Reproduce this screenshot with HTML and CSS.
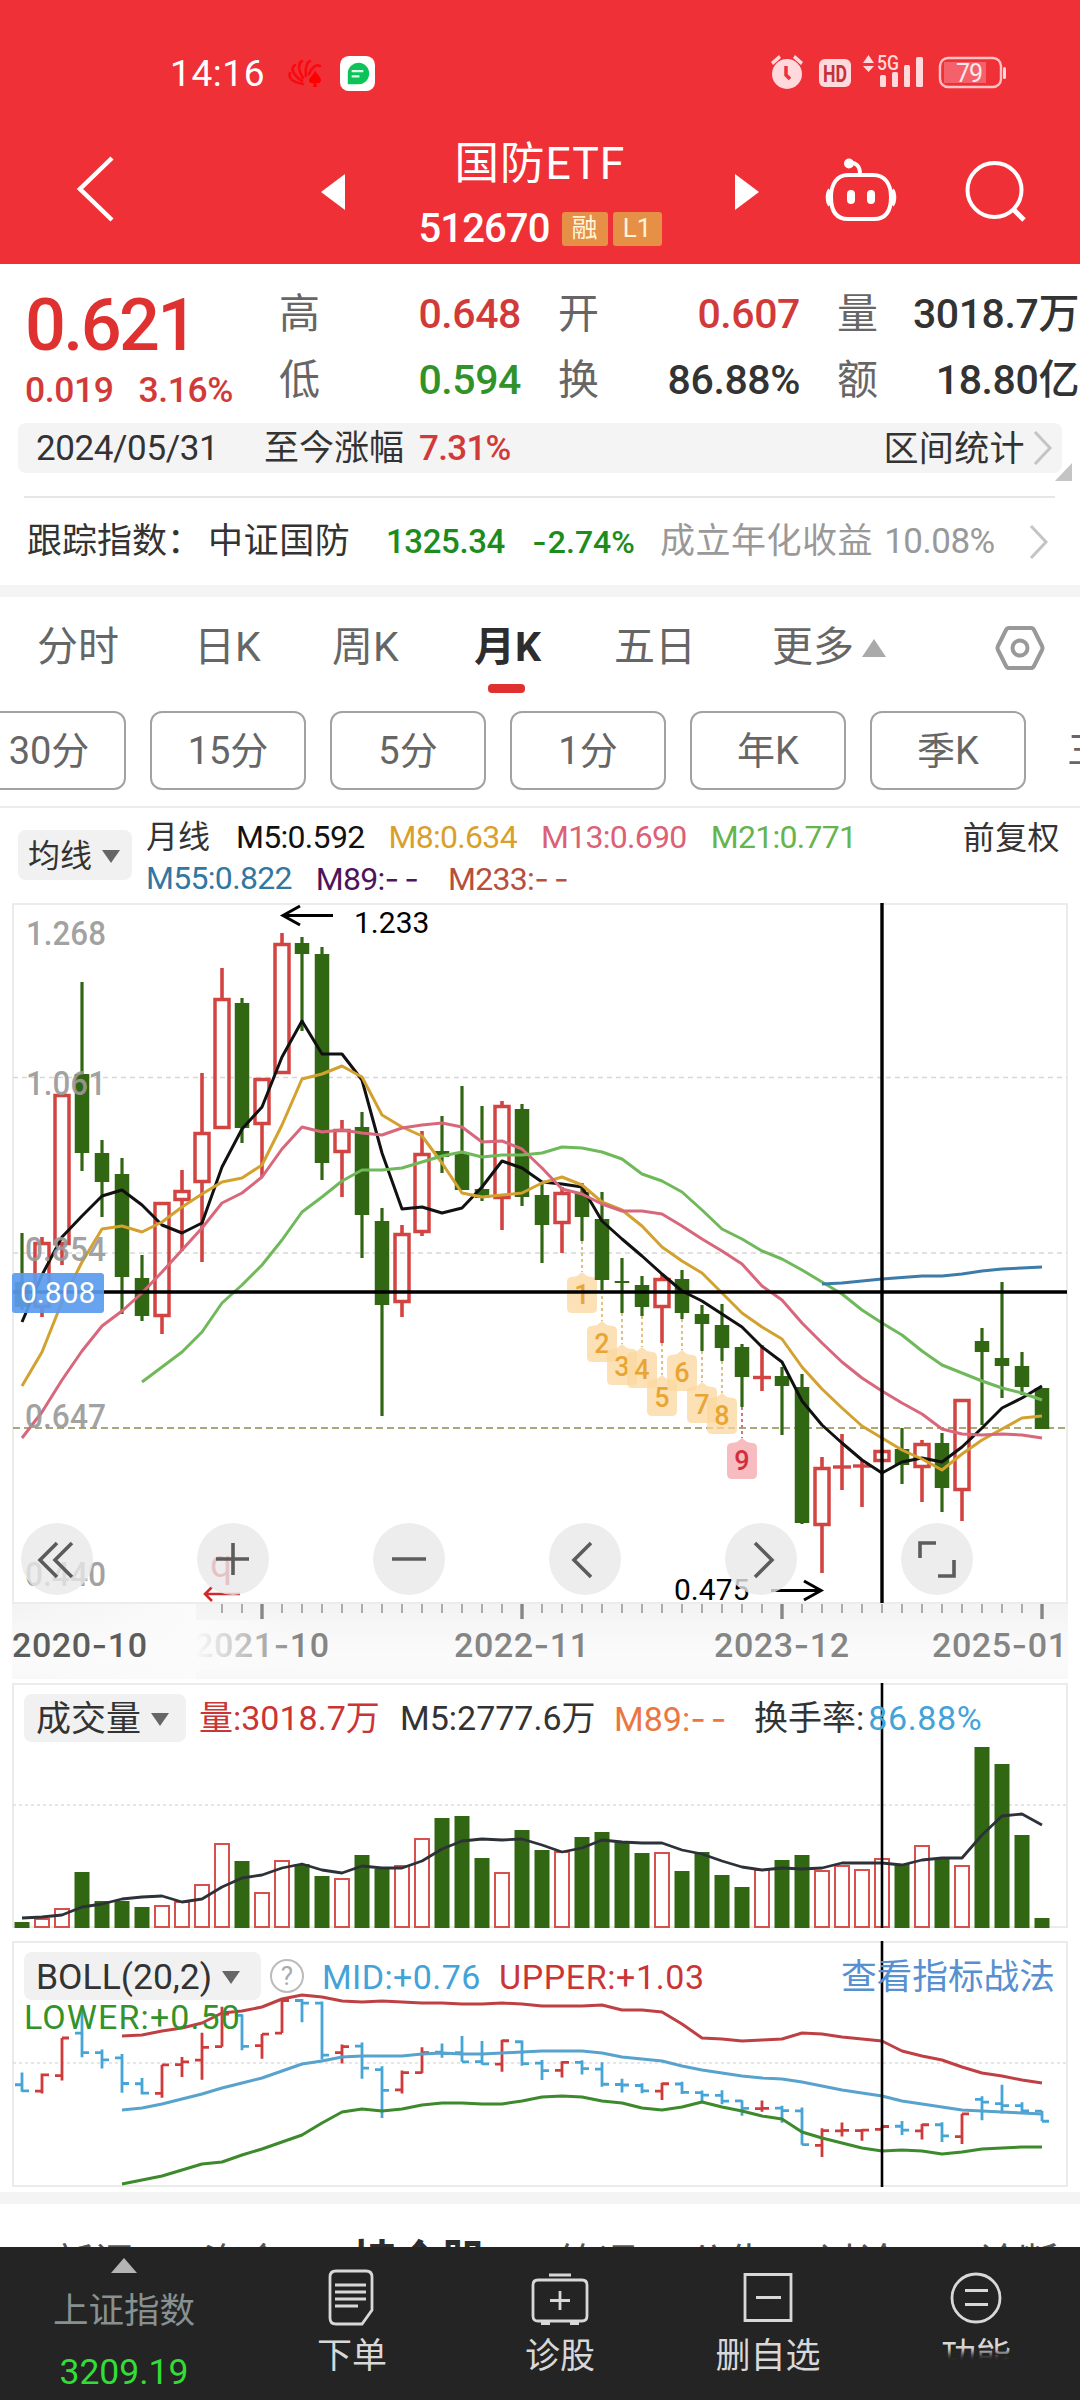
FILE: index.html
```html
<!DOCTYPE html>
<html lang="zh-CN">
<head>
<meta charset="utf-8">
<title>国防ETF 512670</title>
<link rel="stylesheet" href="styles.css">
</head>
<body>
<div class="app">
  <header class="header">
    <div class="status">
      <span class="clock">14:16</span>
      <svg class="st-flower" viewBox="0 0 36 30"><g fill="none" stroke="#f90a10" stroke-width="2.6" stroke-linecap="round"><path d="M16 26C5 24 1 20 3 15M15 23C6 17 3 10 8 7M16 20C11 12 11 5 15 3M19 18C18 10 20 4 23 3M22 16C25 9 29 6 33 8"/></g><path d="M28 12C30 17 34 18 34 23Q33 26 29 25L30 29H26L27 25Q22 26 22 22C23 18 27 17 28 12Z" fill="#f00"/></svg>
      <svg class="st-msg" viewBox="0 0 36 36"><rect width="36" height="36" rx="9" fill="#fff"/><path d="M8 29V18A11 11 0 1 1 18 29Z" fill="#0cc35a"/><path d="M12 15.5H24M12 21H20" stroke="#d8ffe6" stroke-width="2.4"/></svg>
      <svg class="st-right" viewBox="768 50 242 42">
        <g fill="#ffd9db"><circle cx="787" cy="74" r="15"/><path d="M771 62L779 55L781 58L773 65ZM803 62L795 55L793 58L801 65Z"/><rect x="819" y="59" width="32" height="28" rx="6"/><path d="M863 63L868.500 55L874 63ZM863 66H874L868.500 72Z"/><rect x="880" y="75" width="6" height="12" rx="1.500"/><rect x="892" y="72" width="6" height="15" rx="1.500"/><rect x="904" y="65" width="6" height="22" rx="1.500"/><rect x="916" y="57" width="7" height="30" rx="1.500"/><rect x="1003" y="67" width="3" height="12" rx="1.500"/></g>
        <path d="M786 66V75L790 79" fill="none" stroke="#ef3038" stroke-width="3.500"/>
        <rect x="944" y="62" width="42" height="21" fill="#f4616a"/>
        <rect x="940" y="58" width="61" height="29" rx="8" fill="none" stroke="#ffc3c6" stroke-width="2.400"/>
        <text x="823" y="82" class="hd" textLength="24" lengthAdjust="spacingAndGlyphs">HD</text>
        <text x="877" y="70" class="g5" textLength="22" lengthAdjust="spacingAndGlyphs">5G</text>
        <text x="956" y="82" class="bat" textLength="27">79</text>
      </svg>
    </div>
    <div class="nav">
      <svg class="back" viewBox="0 0 40 68"><path d="M36 3L4 34L36 65" fill="none" stroke="#fff" stroke-width="4.500"/></svg>
      <i class="tri-left"></i>
      <div class="title">
        <div class="name">国防ETF</div>
        <div class="code"><span>512670</span><b>融</b><b class="l1">L1</b></div>
      </div>
      <i class="tri-right"></i>
      <svg class="robot" viewBox="825 156 72 68" fill="none" stroke="#fff" stroke-width="4"><path d="M849 163C856 162 860 166 860 174"/><circle cx="849" cy="163.500" r="3" fill="#fff"/><path d="M848 175H873C885 175 891 184 891 197C891 212 885 219 874 219H848C837 219 831 212 831 197C831 184 837 175 848 175Z"/><path d="M830 190C827 193 827 202 830 205M892 190C895 193 895 202 892 205"/><path d="M851 194V200M871 194V200" stroke-width="8" stroke-linecap="round"/></svg>
      <svg class="search" viewBox="964 158 64 66" fill="none" stroke="#fff" stroke-width="4"><circle cx="994.500" cy="190" r="27"/><path d="M1013 209L1024 220" stroke-width="5"/></svg>
    </div>
  </header>

  <section class="quote">
    <div class="last">
      <div class="price">0.621</div>
      <div class="chg"><span>0.019</span><span>3.16%</span></div>
    </div>
    <dl class="stats">
      <dt>高</dt><dd class="up">0.648</dd><dt>开</dt><dd class="up">0.607</dd><dt>量</dt><dd>3018.7万</dd>
      <dt>低</dt><dd class="down">0.594</dd><dt>换</dt><dd>86.88%</dd><dt>额</dt><dd>18.80亿</dd>
    </dl>
  </section>

  <section class="range">
    <span class="date">2024/05/31</span><span>至今涨幅</span><span class="up pct">7.31%</span>
    <span class="stat-link">区间统计</span>
    <svg class="chev" viewBox="0 0 20 36"><path d="M2 2L17 18L2 34" fill="none" stroke="#c4c4c4" stroke-width="3"/></svg>
    <i class="corner"></i>
  </section>

  <section class="track">
    <span class="t-label">跟踪指数：</span><span class="t-name">中证国防</span><span class="t-val">1325.34</span><span class="t-pct"><i class="dash">-</i>2.74%</span><span class="t-year">成立年化收益 <em>10.08%</em></span>
    <svg class="chev" viewBox="0 0 20 36"><path d="M2 2L17 18L2 34" fill="none" stroke="#c4c4c4" stroke-width="3"/></svg>
  </section>

  <nav class="tabs">
    <span>分时</span><span>日K</span><span>周K</span><span class="active">月K</span><span>五日</span><span class="more">更多<i></i></span>
    <svg class="hex" viewBox="0 0 50 46" fill="none" stroke="#999" stroke-width="4"><path d="M14 3H36Q38 3 39 5L47 21Q48 23 47 25L39 41Q38 43 36 43H14Q12 43 11 41L3 25Q2 23 3 21L11 5Q12 3 14 3Z"/><circle cx="25" cy="23" r="7.500"/></svg>
  </nav>
  <div class="chips">
    <span class="first">30分</span><span>15分</span><span>5分</span><span>1分</span><span>年K</span><span>季K</span><span class="cut">三日</span>
  </div>

  <section class="ma">
    <div class="pill small">均线<i></i></div>
    <div class="ma-lines">
      <div><span class="c-txt">月线</span><span class="c-m5">M5:0.592</span><span class="c-m8">M8:0.634</span><span class="c-m13">M13:0.690</span><span class="c-m21">M21:0.771</span></div>
      <div><span class="c-m55">M55:0.822</span><span class="c-m89">M89:<i class="dash">--</i></span><span class="c-m233">M233:<i class="dash">--</i></span></div>
    </div>
    <span class="adj">前复权</span>
  </section>

  <section class="kline">
    <svg class="plot" viewBox="0 903 1080 780">
      <defs>
        <linearGradient id="axisBg" x1="0" y1="0" x2="0" y2="1"><stop offset="0" stop-color="#f3f3f3"/><stop offset=".7" stop-color="#fbfbfb"/><stop offset="1" stop-color="#f8f8f8"/></linearGradient>
        <linearGradient id="fade" gradientUnits="userSpaceOnUse" x1="195" y1="0" x2="300" y2="0"><stop offset="0" stop-color="#fbfbfb"/><stop offset="1" stop-color="#fbfbfb" stop-opacity="0"/></linearGradient>
        <linearGradient id="fadeLeft" gradientUnits="userSpaceOnUse" x1="12" y1="0" x2="195" y2="0"><stop offset="0" stop-color="#fbfbfb" stop-opacity="0"/><stop offset="1" stop-color="#fbfbfb"/></linearGradient>
        <path id="tag" d="M-15 10Q-15 5 -10 5L-5 4L0 0L5 4L10 5Q15 5 15 10V36Q15 41 10 41H-10Q-15 41 -15 36Z"/>
      </defs>
      <rect x="12" y="1603" width="1056" height="76" fill="url(#axisBg)"/>
      <rect x="12" y="1603" width="184" height="76" fill="url(#fadeLeft)"/>
      <path d="M13 1603V904H1067V1603Z" fill="#fff" stroke="#ececec" stroke-width="2"/>
      <path d="M13 1077.500H1067M13 1253H1067" stroke="#d8d8d8" stroke-width="1.500" stroke-dasharray="5 4"/>
      <path d="M13 1428H1067" stroke="#aaa878" stroke-width="2" stroke-dasharray="7 4"/>
      <g id="tags"></g>
      <g id="candles"></g>
      <g id="averages" fill="none" stroke-width="3" stroke-linejoin="round"></g>
      <g class="ylab">
        <text x="26" y="945" textLength="80" lengthAdjust="spacingAndGlyphs">1.268</text>
        <text x="26" y="1095" textLength="80" lengthAdjust="spacingAndGlyphs">1.061</text>
        <text x="25" y="1261" textLength="81" lengthAdjust="spacingAndGlyphs">0.854</text>
        <text x="25" y="1428" textLength="81" lengthAdjust="spacingAndGlyphs">0.647</text>
        <text x="25" y="1586" textLength="81" lengthAdjust="spacingAndGlyphs">0.440</text>
      </g>
      <path d="M13 1292H1067M882 903V1603" stroke="#000" stroke-width="3.400"/>
      <rect x="12" y="1273" width="92" height="40" rx="3" fill="#5b9bee" fill-opacity=".92"/>
      <text x="20" y="1303" class="num" fill="#fff">0.808</text>
      <text x="354" y="933" class="num">1.233</text>
      <text x="674" y="1600" class="num">0.475</text>
      <g fill="none" stroke="#000" stroke-width="3"><path d="M333 915.500H283M300 906L283 915.500L300 925"/><path d="M771 1590.500H821M804 1581L821 1590.500L804 1600"/></g>
      <text x="210" y="1577" class="q">q</text>
      <path d="M240 1594H205M212 1587L205 1594L212 1601" fill="none" stroke="#d02a2a" stroke-width="2.600"/>
      <g id="ticks"></g>
      <g class="dates">
        <text x="12" y="1657" textLength="135" class="now">2020<tspan>-</tspan>10</text>
        <text x="194" y="1657" textLength="135">2021<tspan>-</tspan>10</text>
        <text x="454" y="1657" textLength="135">2022<tspan>-</tspan>11</text>
        <text x="714" y="1657" textLength="135">2023<tspan>-</tspan>12</text>
        <text x="932" y="1657" textLength="135">2025<tspan>-</tspan>01</text>
      </g>
      <rect x="190" y="1620" width="110" height="50" fill="url(#fade)"/>
    </svg>
    <div class="tools">
      <button><svg viewBox="0 0 72 72"><path d="M36 20L19 37L36 54M51 20L34 37L51 54"/></svg></button>
      <button><svg viewBox="0 0 72 72"><path d="M19 36H52M36 20V52"/></svg></button>
      <button><svg viewBox="0 0 72 72"><path d="M19 36H53"/></svg></button>
      <button><svg viewBox="0 0 72 72"><path d="M42 20L25 37L42 54"/></svg></button>
      <button><svg viewBox="0 0 72 72"><path d="M30 20L47 37L30 54"/></svg></button>
      <button><svg viewBox="0 0 72 72"><path d="M19 35V20H35M53 37V53H37"/></svg></button>
    </div>
  </section>

  <section class="panel">
    <svg class="plot" viewBox="0 1683 1080 245">
      <path d="M13 1684H1067V1927H13Z" fill="none" stroke="#ebebeb" stroke-width="2"/>
      <path d="M13 1805H1067" stroke="#dedede" stroke-width="1.500" stroke-dasharray="3 3"/>
      <g id="volume"></g>
      <path d="M882 1683V1928" stroke="#000" stroke-width="2.600"/>
    </svg>
    <div class="legend vol">
      <div class="pill">成交量<i></i></div>
      <span class="c-red v1">量:3018.7万</span><span class="v2">M5:2777.6万</span><span class="c-org v3">M89:<i class="dash">--</i></span><span>换手率:<em>86.88%</em></span>
    </div>
  </section>

  <section class="panel boll">
    <svg class="plot" viewBox="0 1941 1080 246">
      <path d="M13 1942H1067V2186H13Z" fill="none" stroke="#ebebeb" stroke-width="2"/>
      <path d="M13 2063H1067" stroke="#dedede" stroke-width="1.500" stroke-dasharray="3 3"/>
      <g id="bands" fill="none" stroke-width="3" stroke-linejoin="round"></g>
      <path d="M882 1941V2187" stroke="#000" stroke-width="2.600"/>
    </svg>
    <div class="legend bl">
      <div class="pill">BOLL(20,2)<i></i></div>
      <span class="help">?</span>
      <span class="c-mid">MID:+0.76</span><span class="c-red upper">UPPER:+1.03</span>
      <a>查看指标战法</a>
      <span class="c-low">LOWER:+0.50</span>
    </div>
  </section>

  <section class="below"><span>新闻</span><span>资金</span><span class="on">持仓股</span><span>简况</span><span>公告</span><span class="wide">讨论</span><span>诊断</span></section>

  <footer class="bar">
    <div class="index"><i></i><span>上证指数</span><b>3209.19</b></div>
    <div class="item"><svg viewBox="0 0 60 60"><path d="M14 3H44Q50 3 50 9V42L40 56H14Q8 56 8 50V9Q8 3 14 3Z"/><path d="M13 17H44M13 24H44M13 31H44M13 38H36"/></svg><span>下单</span></div>
    <div class="item"><svg viewBox="0 0 60 60"><path d="M8 12H52Q57 12 57 17V48Q57 53 52 53H8Q3 53 3 48V17Q3 12 8 12ZM19 7H41M30 23V42M20 32.500H40M11 55.500H20M40 55.500H49"/></svg><span>诊股</span></div>
    <div class="item"><svg viewBox="0 0 60 60"><path d="M7 6.500H53V52.500H7ZM18 29.500H43"/></svg><span>删自选</span></div>
    <div class="item last-item"><svg viewBox="0 0 60 60"><circle cx="30" cy="30" r="24"/><path d="M19 22.500H42M19 36.500H42"/></svg><span>功能</span></div>
  </footer>
</div>
<script src="chart.js"></script>
</body>
</html>
```
FILE: styles.css
```css
* { box-sizing: border-box; }
body { margin: 0; background: #fff; }
.app { width: 1080px; height: 2400px; overflow: hidden; font-family: Roboto, "Noto Sans CJK SC", sans-serif; font-size: 34px; line-height: 1; color: #333; background: #fff; }
i, em { font-style: normal; }
svg { display: block; }
span, dt, dd, a { white-space: nowrap; }
.up { color: #d23a3a; }
.down { color: #32922a; }
.dash { font-family: Inter, sans-serif; letter-spacing: 5px; }

.header { height: 264px; background: #f03037; color: #fff; padding-top: 50px; }
.status { display: flex; align-items: center; height: 46px; padding-left: 170px; }
.clock { font-size: 37px; width: 117px; letter-spacing: .6px; }
.st-flower { width: 36px; height: 30px; margin-right: 17px; }
.st-msg { width: 35px; height: 35px; margin-right: 393px; }
.st-right { width: 242px; height: 42px; margin-top: -4px; }
.hd { font: 700 23px Roboto; fill: #c2323b; }
.g5 { font: 500 21px Roboto; fill: #ffd9db; }
.bat { font: 25px Roboto; fill: #ffe9ea; }
.nav { display: flex; align-items: flex-start; padding-left: 76px; }
.back { width: 40px; height: 68px; margin: 59px 205px 0 0; }
.tri-left { margin-top: 78px; border: 18px solid transparent; border-right: 24px solid #fff; border-left: 0; }
.tri-right { margin-top: 78px; border: 18px solid transparent; border-left: 24px solid #fff; border-right: 0; }
.title { width: 390px; padding-top: 45px; text-align: center; }
.name { font-size: 44.5px; line-height: 46px; letter-spacing: 1px; }
.code { display: flex; align-items: center; justify-content: center; margin-top: 24px; height: 36px; font-size: 40px; font-weight: 500; }
.code span { margin-right: 12px; letter-spacing: -.9px; }
.code b { width: 46px; height: 34px; margin-right: 5px; border-radius: 3px; background: #e68f47; color: #fff4d8; font-weight: 400; font-size: 26px; line-height: 33px; }
.code .l1 { width: 49px; margin-right: 0; }
.robot { width: 72px; height: 68px; margin: 60px 67px 0 66px; }
.search { width: 64px; height: 66px; margin-top: 62px; }

.quote { display: flex; height: 159px; padding: 17px 1px 0 25px; }
.last { width: 254px; color: #e03131; }
.price { font-size: 72px; font-weight: 500; line-height: 90px; letter-spacing: -2.6px; }
.chg { display: flex; gap: 25px; margin-top: -4px; font-size: 35.5px; font-weight: 500; line-height: 46px; color: #d23a3a; letter-spacing: -.4px; }
.stats { flex: 1; display: grid; grid-template-columns: 41px 201px 78px 201px 78px 1fr; grid-template-rows: 66px 66px; margin: 0; font-size: 41px; line-height: 67px; }
.stats dt { color: #666; text-align: right; }
.stats dd { margin: 0; text-align: right; font-weight: 500; letter-spacing: -.4px; }

.range { position: relative; display: flex; align-items: center; height: 50px; margin: 0 18px; padding: 0 9px 0 18px; border-radius: 8px; background: #f4f4f4; font-size: 35px; }
.date { width: 228px; letter-spacing: -.4px; }
.range .pct { margin-left: 15px; font-weight: 500; letter-spacing: -.7px; }
.stat-link { margin-left: auto; margin-right: 8px; padding-top: 3px; letter-spacing: .4px; }
.chev { width: 20px; height: 36px; }
.corner { position: absolute; right: -10px; bottom: -8px; width: 0; height: 0; border: solid transparent; border-width: 0 0 18px 17px; border-bottom-color: #c4c4c4; }

.track { display: flex; align-items: center; height: 112px; padding: 25px 31px 0 27px; font-size: 35px; background: linear-gradient(#e6e6e6, #e6e6e6) 24px 23px / 1031px 2px no-repeat; }
.t-label { width: 181px; }
.t-name { width: 178px; letter-spacing: .6px; }
.t-val { width: 146px; font-size: 33px; font-weight: 500; letter-spacing: -.4px; color: #1c8c1c; }
.t-pct { width: 128px; font-size: 32px; font-weight: 500; color: #1c8c1c; }
.t-pct .dash { letter-spacing: 1px; }
.t-year { color: #999; flex: 1; letter-spacing: .5px; }
.t-year em { margin-left: 2px; letter-spacing: -.5px; }

.tabs { display: grid; grid-template-columns: 157px 138px 142px 140px 158px 222px 50px; align-items: center; height: 126px; padding: 0 0 13px 37px; border-top: 12px solid #f4f4f4; font-size: 41px; color: #666; }
.tabs .active { color: #2d2d2d; font-weight: 700; position: relative; }
.tabs .active::after { content: ""; position: absolute; left: 14px; top: 57px; width: 37px; height: 9px; border-radius: 4px; background: #e03131; }
.more { display: flex; align-items: center; }
.more i { margin-left: 8px; border: 12px solid transparent; border-top: 0; border-bottom: 18px solid #aaa; }
.hex { width: 50px; height: 46px; margin-left: 1px; }
.chips { display: flex; gap: 24px; height: 97px; margin-left: -30px; border-bottom: 2px solid #ececec; overflow: hidden; }
.chips span { flex: none; width: 156px; height: 79px; border: 2px solid #a2a2a2; border-radius: 12px; color: #666; font-size: 38px; line-height: 76px; text-align: center; }
.chips .cut { border: 0; text-align: left; padding-left: 17px; line-height: 79px; }
.chips .first { padding-left: 2px; }

.pill { display: flex; align-items: center; height: 48px; padding-left: 12px; border-radius: 8px; background: #f1f1f1; color: #333; }
.pill i { border: 9px solid transparent; border-bottom: 0; border-top: 13px solid #666; }
.pill.small { width: 114px; height: 50px; padding: 2px 0 0 10px; font-size: 32px; }
.pill.small i { margin-left: 10px; }
.ma { display: flex; height: 95px; padding: 22px 20px 0 18px; font-size: 32px; }
.ma-lines { width: 800px; margin: -13px 0 0 14px; line-height: 41px; }
.ma-lines div { display: flex; gap: 24px; }
.ma-lines span { letter-spacing: -.7px; }
.ma-lines .dash { letter-spacing: 5px; }
.ma-lines .c-txt { margin-right: 2px; letter-spacing: 0; }
.ma-lines .c-m5 { color: #111; }
.adj { margin: -12px 0 0 auto; line-height: 41px; letter-spacing: .4px; }
.c-m8 { color: #d9a02b; } .c-m13 { color: #dc6176; } .c-m21 { color: #65b44c; }
.c-m55 { color: #3277a1; } .c-m89 { color: #4d145c; } .c-m233 { color: #b4503c; }

.kline { position: relative; height: 780px; }
.plot { width: 100%; height: 100%; }
.ylab text { font: 500 34px Roboto; fill: #999; fill-opacity: .92; }
.num { font: 30px Roboto; }
.q { font: 39px Roboto; fill: #d8303a; }
.dates text { font: 500 34px Roboto; fill: #858585; }
.dates .now { fill: #5c5c5c; }
.dates tspan { font-family: Inter; }
.tag-num { font: 500 27px Roboto; text-anchor: middle; }
.tools { position: absolute; left: 21px; top: 620px; display: flex; gap: 104px; }
.tools button { width: 72px; height: 72px; padding: 0; border: 0; border-radius: 50%; background: rgba(232, 232, 232, .8); }
.tools path { fill: none; stroke: #5c5c5c; stroke-width: 3.6; }

.panel { display: grid; height: 245px; margin-bottom: 13px; }
.panel > * { grid-area: 1 / 1; }
.boll { height: 246px; margin-bottom: 5px; }
.legend { display: flex; align-items: flex-start; height: 245px; padding: 11px 25px 0 24px; line-height: 49px; }
.legend .pill { margin-right: 13px; }
.vol .pill { width: 162px; padding-top: 3px; font-size: 35px; }
.vol .pill i { margin-left: 10px; }
.v1 { width: 201px; } .v2 { width: 214px; } .v3 { width: 140px; }
.vol em { margin-left: 4px; color: #43a3d8; letter-spacing: .6px; }
.c-red { color: #cb3434; } .c-org { color: #e9773f; } .c-mid { color: #43a3d8; width: 177px; letter-spacing: .4px; } .c-low { color: #34922a; }
.upper { letter-spacing: .6px; }
.bl { flex-wrap: wrap; align-content: flex-start; line-height: 51px; }
.bl .pill { width: 237px; margin-right: 9px; padding-top: 2px; font-size: 35.5px; }
.bl .pill i { margin-left: 10px; }
.help { width: 34px; height: 34px; margin: 7px 18px 0 0; border: 2.5px solid #bbb; border-radius: 50%; color: #aaa; font-size: 26px; line-height: 30px; text-align: center; }
.legend a { margin-left: auto; font-size: 35.7px; color: #5790d0; }
.c-low { width: 100%; margin-top: -12px; line-height: 52px; letter-spacing: 1.1px; }

.below { display: flex; height: 55px; padding: 42px 0 0 54px; border-top: 12px solid #f4f4f4; overflow: hidden; font-size: 40px; line-height: 40px; color: #555; }
.below span { flex: none; width: 149px; margin-top: -2px; }
.below .on { width: 206px; margin-top: -3px; color: #2d2d2d; font-weight: 700; font-size: 45px; }
.below span:nth-child(n+4) { width: 130px; }
.below .wide:nth-child(6) { width: 160px; }

.bar { display: grid; grid-template-columns: 248px repeat(4, 208px); height: 153px; background: #242424; color: #d8d8d8; }
.index { display: flex; flex-direction: column; align-items: center; padding-top: 11px; font-size: 35.5px; color: #879191; }
.index i { border: 13px solid transparent; border-top: 0; border-bottom: 15px solid #b4b4b4; margin-bottom: 21px; }
.index b { margin-top: 25px; font-weight: 400; color: #32dd35; font-size: 35.5px; }
.item { display: flex; flex-direction: column; align-items: center; padding-top: 21px; font-size: 35px; }
.item svg { width: 60px; height: 60px; fill: none; stroke: #d8d8d8; stroke-width: 2.8; }
.item span { margin-top: 11px; }
.last-item { position: relative; }
.last-item::after { content: ""; position: absolute; left: 42px; top: 106px; width: 160px; height: 46px; background: #242424; filter: blur(3px); }
```
FILE: chart.js
```js
// [rising, high, body top, body bottom, low, volume top] for each month
const months = [
[0,1233,1282,1307,1310,1922],[1,1237,1242,1308,1317,1918],[1,1094,1094,1245,1265,1908],[0,982,1074,1153,1171,1872],[0,1140,1153,1182,1217,1901],[0,1158,1174,1277,1314,1901],
[0,1255,1278,1316,1321,1907],[1,1202,1202,1317,1334,1905],[1,1170,1190,1201,1251,1901],[1,1073,1132,1183,1262,1884],[1,968,998,1129,1129,1843],[0,998,1003,1128,1143,1861],
[1,1078,1078,1125,1177,1892],[1,933,943,1074,1074,1860],[0,937,943,954,1031,1864],[0,947,954,1163,1180,1876],[1,1120,1129,1153,1197,1878],[0,1112,1127,1215,1258,1855],
[0,1208,1221,1305,1416,1869],[1,1225,1233,1303,1317,1865],[1,1131,1153,1233,1236,1838],[0,1116,1151,1157,1173,1818],[0,1086,1153,1190,1190,1816],[0,1106,1189,1198,1201,1858],
[1,1101,1105,1199,1230,1872],[0,1104,1109,1197,1206,1830],[0,1182,1195,1225,1263,1850],[1,1187,1192,1224,1253,1851],[0,1183,1192,1217,1241,1837],[0,1192,1219,1280,1290,1832],
[0,1258,1281,1283,1313,1842],[0,1276,1285,1307,1316,1853],[1,1274,1278,1308,1343,1852],[0,1270,1279,1313,1319,1871],[0,1305,1314,1324,1351,1852],[0,1304,1325,1348,1361,1875],
[0,1344,1347,1377,1407,1887],[1,1345,1377,1378,1391,1869],[0,1367,1376,1386,1435,1860],[0,1374,1387,1523,1524,1855],[1,1457,1467,1526,1573,1870],[1,1434,1466,1468,1490,1865],
[1,1460,1465,1467,1507,1869],[1,1450,1450,1462,1462,1858],[0,1428,1449,1465,1484,1864],[1,1440,1443,1468,1502,1845],[0,1433,1443,1488,1512,1859],[1,1399,1399,1491,1521,1865],
[0,1328,1341,1352,1425,1747],[0,1282,1358,1366,1398,1764],[0,1352,1366,1387,1395,1835],[0,1388,1388,1429,1429,1918]
];
const GREEN = '#316613', RED = '#d24442';
const x = i => 22 + 20 * i;
const put = (id, html) => { document.getElementById(id).innerHTML = html; };
const path = (d, color, w) => `<path d="${d}" stroke="${color}" stroke-width="${w}" fill="none"/>`;
const line = (start, values, color) =>
  `<polyline stroke="${color}" points="${values.map((v, i) => x(start + i) + ',' + v).join(' ')}"/>`;

let candles = '', volume = '', bars = '';
months.forEach(([up, hi, top, bot, lo, vol], i) => {
  const c = x(i);
  if (up) {
    candles += path(`M${c} ${hi}V${top}M${c} ${bot}V${lo}`, RED, 3.6);
    candles += bot - top < 4 ? path(`M${c - 9} ${(top + bot) / 2}H${c + 9}`, RED, 3.4)
      : `<rect x="${c - 7}" y="${top + 1.5}" width="14" height="${bot - top - 3}" fill="none" stroke="${RED}" stroke-width="3.5"/>`;
    volume += `<rect x="${c - 7}" y="${vol + 1}" width="14" height="${1926 - vol}" fill="#fff" stroke="#d8504e" stroke-width="2"/>`;
  } else {
    candles += path(`M${c} ${hi}V${lo}`, GREEN, 3.2) + path(`M${c} ${top}V${bot}`, GREEN, 14.5);
    volume += path(`M${c} ${vol}V1928`, GREEN, 15);
  }
  const b = v => 1999 + (v - 937) * 0.2485;
  const open = b(up ? bot : top), close = b(up ? top : bot);
  bars += path(`M${c} ${b(hi)}V${b(lo)}M${c - 7} ${open}H${c}M${c} ${close}H${c + 7}`, up ? '#cf3b3b' : '#46a5d6', 2.8);
});
put('candles', candles);

put('averages',
  line(0, [1322,1275,1237,1216,1196,1190,1205,1225,1233,1223,1167,1129,1107,1057,1021,1054,1054,1080,1153,1209,1207,1213,1208,1187,1161,1168,1182,1184,1187,1221,1239,1256,1274,1291,1301,1314,1327,1347,1362,1401,1425,1443,1460,1473,1462,1458,1462,1447,1428,1408,1398,1386], '#111') +
  line(0, [1386,1352,1302,1262,1229,1226,1232,1222,1207,1194,1182,1178,1165,1125,1079,1074,1066,1077,1115,1127,1136,1163,1193,1197,1195,1193,1183,1177,1185,1202,1210,1226,1247,1261,1273,1293,1313,1327,1339,1367,1389,1408,1426,1438,1450,1459,1470,1454,1440,1429,1418,1416], '#d3a12e') +
  line(0, [1438,1412,1380,1351,1326,1311,1293,1272,1250,1228,1203,1193,1177,1149,1127,1132,1130,1133,1135,1128,1125,1123,1127,1142,1141,1149,1168,1189,1194,1204,1211,1211,1214,1226,1239,1251,1264,1286,1300,1323,1343,1362,1378,1391,1403,1414,1429,1434,1435,1434,1435,1438], '#d9677b') +
  line(6, [1382,1367,1352,1332,1303,1285,1265,1240,1212,1197,1181,1170,1170,1168,1162,1156,1152,1157,1155,1155,1153,1147,1148,1152,1159,1174,1181,1192,1210,1229,1239,1251,1259,1270,1282,1294,1310,1323,1335,1351,1365,1373,1381,1388,1393,1400], '#6fb95a') +
  line(40, [1284,1283,1281,1279,1277.500,1276,1276,1274,1271,1269,1268,1267], '#3c7ca8'));

// nine-turn sequence markers
const tagTops = [1272,1321,1344,1347,1375,1350,1382,1393,1438];
put('tags', tagTops.map((t, i) => {
  const c = x(28 + i), last = i === 8;
  return `<path d="M${c} ${months[28 + i][4]}V${t}" stroke="${last ? '#c7798a' : '#e3c07e'}" stroke-width="2" stroke-dasharray="3 3"/>` +
    `<use href="#tag" x="${c}" y="${t}" fill="${last ? '#f6bcc0' : '#fbd79d'}" fill-opacity="${last ? 1 : .75}"/>` +
    `<text class="tag-num" x="${c}" y="${t + 32}" fill="${last ? '#d22f3c' : '#e9a534'}">${i + 1}</text>`;
}).join(''));

let ticks = '';
for (let i = 10; i < 52; i++) {
  const major = i % 13 === 12;
  ticks += path(`M${x(i)} 1604V${major ? 1619 : 1613}`, '#868686', major ? 3.4 : 1.3);
}
put('ticks', ticks);

put('volume', volume + '<g fill="none" stroke-width="2.8" stroke-linejoin="round">' +
  line(0, [1918,1917,1915,1907,1904,1899,1897,1896,1902,1899,1887,1878,1875,1868,1864,1870,1873,1866,1868,1868,1861,1849,1841,1839,1840,1839,1845,1852,1848,1840,1842,1843,1843,1850,1854,1861,1867,1870,1868,1869,1868,1863,1863,1863,1865,1860,1858,1858,1835,1816,1814,1825], '#2c3238') + '</g>');

put('bands', bars +
  line(5, [2036,2035,2031,2028,2023,2013,2011,2007,1999,1995,1997,2001,2002,2001,2002,2003,2003,2004,2004,2003,2004,2006,2006,2006,2005,2010,2010,2012,2024,2038,2039,2041,2040,2039,2033,2034,2037,2039,2041,2051,2056,2060,2067,2073,2076,2080,2083], '#bf4044') +
  line(5, [2110,2108,2104,2099,2094,2088,2083,2078,2071,2064,2061,2057,2056,2056,2056,2054,2053,2054,2054,2053,2052,2051,2051,2051,2053,2057,2059,2061,2066,2070,2073,2076,2078,2079,2082,2086,2090,2093,2096,2101,2104,2107,2110,2111,2112,2113,2114], '#57a3cd') +
  line(5, [2184,2180,2176,2170,2164,2162,2155,2149,2142,2135,2123,2112,2109,2111,2109,2105,2103,2103,2104,2104,2101,2097,2096,2097,2101,2103,2108,2110,2107,2102,2107,2111,2116,2119,2132,2138,2143,2148,2151,2150,2151,2154,2152,2149,2148,2147,2147], '#3c8a2c'));
```
